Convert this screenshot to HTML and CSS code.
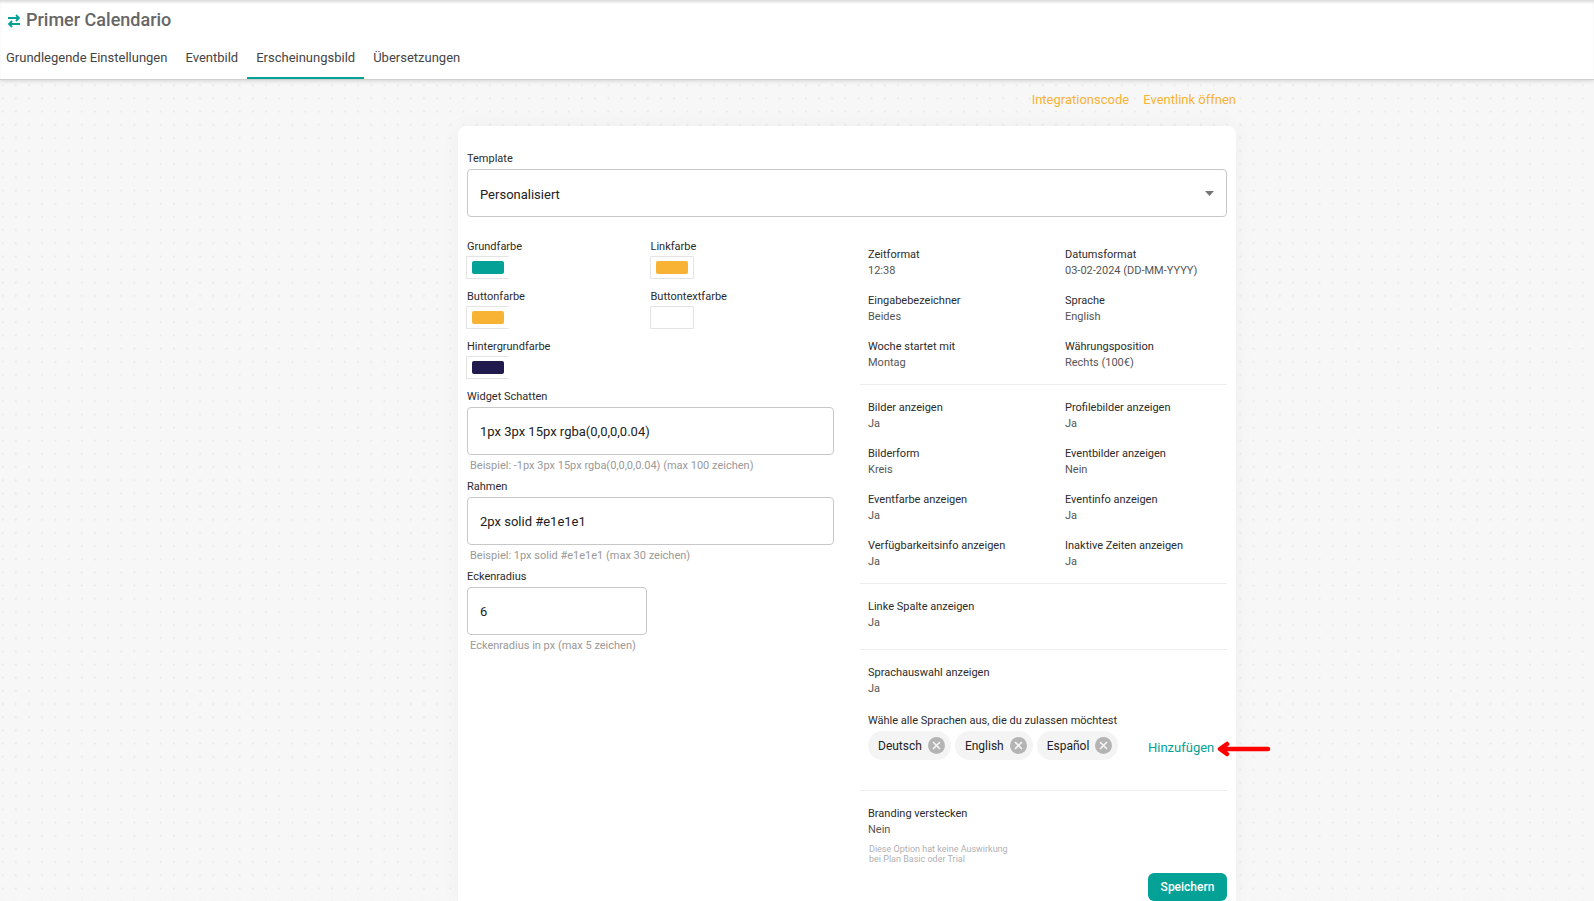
FILE: index.html
```html
<!DOCTYPE html>
<html lang="de">
<head>
<meta charset="utf-8">
<meta name="viewport" content="width=device-width, initial-scale=1">
<title>Primer Calendario</title>
<link rel="stylesheet" href="styles.css">
</head>
<body>
<header class="header">
  <div class="title-row">
    <svg class="swap" width="12" height="14" viewBox="0 0 12 14" fill="none" stroke="currentColor" stroke-width="1.8" aria-hidden="true">
      <path d="M0 4H11M8 1l3 3-3 3M12 10H1M4 7l-3 3 3 3"/>
    </svg>
    <h1 class="title">Primer Calendario</h1>
  </div>
  <nav class="tabs">
    <a class="tab" href="#basic">Grundlegende Einstellungen</a>
    <a class="tab" href="#image">Eventbild</a>
    <a class="tab tab-active" href="#appearance" aria-current="page">Erscheinungsbild</a>
    <a class="tab" href="#translations">Übersetzungen</a>
  </nav>
</header>

<main class="main">
  <div class="content">
    <div class="links">
      <a class="link" href="#code">Integrationscode</a>
      <a class="link" href="#open">Eventlink öffnen</a>
    </div>
    <form class="card">
      <div class="field">
        <label class="label" for="template">Template</label>
        <select class="control select" id="template"><option>Personalisiert</option></select>
      </div>

      <div class="columns">
        <div class="left">
          <div class="colors">
            <div class="color-field">
              <label class="label" for="c1">Grundfarbe</label>
              <input class="color color-open" id="c1" type="color" value="#03a196">
            </div>
            <div class="color-field">
              <label class="label" for="c2">Linkfarbe</label>
              <input class="color" id="c2" type="color" value="#f8b335">
            </div>
            <div class="color-field">
              <label class="label" for="c3">Buttonfarbe</label>
              <input class="color color-open" id="c3" type="color" value="#f8b335">
            </div>
            <div class="color-field">
              <label class="label" for="c4">Buttontextfarbe</label>
              <input class="color" id="c4" type="color" value="#ffffff">
            </div>
            <div class="color-field">
              <label class="label" for="c5">Hintergrundfarbe</label>
              <input class="color color-open" id="c5" type="color" value="#211a4c">
            </div>
          </div>
          <div class="fields">
            <div class="field">
              <label class="label" for="shadow">Widget Schatten</label>
              <input class="control" id="shadow" type="text" value="1px 3px 15px rgba(0,0,0,0.04)">
              <p class="hint">Beispiel: -1px 3px 15px rgba(0,0,0,0.04) (max 100 zeichen)</p>
            </div>
            <div class="field">
              <label class="label" for="border">Rahmen</label>
              <input class="control" id="border" type="text" value="2px solid #e1e1e1">
              <p class="hint">Beispiel: 1px solid #e1e1e1 (max 30 zeichen)</p>
            </div>
            <div class="field">
              <label class="label" for="radius">Eckenradius</label>
              <input class="control control-short" id="radius" type="text" value="6">
              <p class="hint">Eckenradius in px (max 5 zeichen)</p>
            </div>
          </div>
        </div>

        <div class="right">
          <dl class="group">
            <div><dt>Zeitformat</dt><dd>12:38</dd></div>
            <div><dt>Datumsformat</dt><dd>03-02-2024 (DD-MM-YYYY)</dd></div>
            <div><dt>Eingabebezeichner</dt><dd>Beides</dd></div>
            <div><dt>Sprache</dt><dd>English</dd></div>
            <div><dt>Woche startet mit</dt><dd>Montag</dd></div>
            <div><dt>Währungsposition</dt><dd>Rechts (100€)</dd></div>
          </dl>
          <dl class="group">
            <div><dt>Bilder anzeigen</dt><dd>Ja</dd></div>
            <div><dt>Profilebilder anzeigen</dt><dd>Ja</dd></div>
            <div><dt>Bilderform</dt><dd>Kreis</dd></div>
            <div><dt>Eventbilder anzeigen</dt><dd>Nein</dd></div>
            <div><dt>Eventfarbe anzeigen</dt><dd>Ja</dd></div>
            <div><dt>Eventinfo anzeigen</dt><dd>Ja</dd></div>
            <div><dt>Verfügbarkeitsinfo anzeigen</dt><dd>Ja</dd></div>
            <div><dt>Inaktive Zeiten anzeigen</dt><dd>Ja</dd></div>
          </dl>
          <dl class="group group-roomy">
            <div><dt>Linke Spalte anzeigen</dt><dd>Ja</dd></div>
          </dl>
          <section class="languages">
            <dl class="pair">
              <div><dt>Sprachauswahl anzeigen</dt><dd>Ja</dd></div>
            </dl>
            <p class="chips-label">Wähle alle Sprachen aus, die du zulassen möchtest</p>
            <div class="chips-row">
              <ul class="chips">
                <li class="chip">Deutsch<button class="remove" type="button" aria-label="Deutsch entfernen"><svg width="17" height="17" viewBox="0 0 17 17" aria-hidden="true"><circle cx="8.500" cy="8.500" r="8.500" fill="#b4b4b4"/><path d="M5 5l7 7M12 5l-7 7" stroke="#f4f4f4" stroke-width="1.700"/></svg></button></li>
                <li class="chip">English<button class="remove" type="button" aria-label="English entfernen"><svg width="17" height="17" viewBox="0 0 17 17" aria-hidden="true"><circle cx="8.500" cy="8.500" r="8.500" fill="#b4b4b4"/><path d="M5 5l7 7M12 5l-7 7" stroke="#f4f4f4" stroke-width="1.700"/></svg></button></li>
                <li class="chip">Español<button class="remove" type="button" aria-label="Español entfernen"><svg width="17" height="17" viewBox="0 0 17 17" aria-hidden="true"><circle cx="8.500" cy="8.500" r="8.500" fill="#b4b4b4"/><path d="M5 5l7 7M12 5l-7 7" stroke="#f4f4f4" stroke-width="1.700"/></svg></button></li>
              </ul>
              <div class="add-wrap">
                <button class="add" type="button">Hinzufügen</button>
                <svg class="arrow" width="54" height="16" viewBox="0 0 54 16" fill="none" stroke="#f00" stroke-width="4.500" stroke-linecap="round" stroke-linejoin="round" aria-hidden="true">
                  <path d="M4 8H51M10 3L3 8l7 5"/>
                </svg>
              </div>
            </div>
          </section>
          <section class="branding">
            <dl class="pair">
              <div><dt>Branding verstecken</dt><dd>Nein</dd></div>
            </dl>
            <p class="note">Diese Option hat keine Auswirkung bei Plan Basic oder Trial</p>
          </section>
          <button class="save" type="button">Speichern</button>
        </div>
      </div>
    </form>
  </div>
</main>
</body>
</html>
```
FILE: styles.css
```css
* { box-sizing: border-box; }

body, h1, p, dl, dd, ul { margin: 0; padding: 0; }

body {
  min-height: 100vh;
  display: flex;
  flex-direction: column;
  font: 11px/16px Roboto, "Liberation Sans", sans-serif;
  color: #2b2b2b;
  overflow-x: hidden;
}

input, select, button { font-family: inherit; margin: 0; }

a { text-decoration: none; }

.header {
  position: relative;
  background: #fff;
  border-bottom: 1px solid #d0d0d0;
  box-shadow: 0 1px 4px rgba(0, 0, 0, .15), inset 0 3px 3px -1px rgba(0, 0, 0, .15);
}

.title-row {
  display: flex;
  align-items: center;
  gap: 6px;
  padding: 8px 8px 0;
}

.swap { color: #03a196; margin-top: 2px; }

.title { font-size: 18px; line-height: 24px; font-weight: 500; color: #666; }

.tabs { display: flex; padding-top: 4px; }

.tab {
  padding: 14px 9px 11px;
  border-bottom: 2px solid transparent;
  font-size: 13px;
  line-height: 16px;
  color: #444;
}

.tab:first-child { padding-left: 6px; }

.tab-active { border-color: #03a196; }

.main {
  flex: 1;
  display: flex;
  justify-content: center;
  padding-left: 100px;
  background: #f7f7f7 url("data:image/svg+xml,%3Csvg xmlns='http://www.w3.org/2000/svg' width='79' height='79' viewBox='0 0 60 60'%3E%3Cpattern id='p' width='10' height='10' patternUnits='userSpaceOnUse'%3E%3Ccircle cx='2' cy='4' r='.8' fill='%23e9e9e9'/%3E%3C/pattern%3E%3Crect width='60' height='60' fill='url(%23p)'/%3E%3C/svg%3E");
}

.content {
  width: 100%;
  max-width: 778px;
  display: flex;
  flex-direction: column;
}

.links {
  display: flex;
  justify-content: flex-end;
  gap: 14px;
  padding: 11px 0 18px;
}

.link { font-size: 13px; line-height: 17px; color: #f8b335; }

.card {
  flex: 1;
  padding: 25px 9px 0;
  background: #fff;
  border-radius: 8px 8px 0 0;
  box-shadow: 0 0 20px rgba(0, 0, 0, .04);
}

.field, .color-field { display: flex; flex-direction: column; align-items: flex-start; }

.label { line-height: 16px; }

.control {
  width: 100%;
  height: 48px;
  margin-top: 2px;
  padding: 0 12px;
  border: 1px solid #c8c8c8;
  border-radius: 4px;
  background: #fff;
  font-size: 13px;
  color: #222;
}

.select {
  appearance: none;
  padding-top: 2px;
  background: #fff url("data:image/svg+xml,%3Csvg xmlns='http://www.w3.org/2000/svg' width='9' height='5'%3E%3Cpath d='M0 0h9L4.500 5z' fill='%23757575'/%3E%3C/svg%3E") no-repeat right 12px center;
}

.control-short { width: 180px; }

.columns {
  display: grid;
  grid-template-columns: 1fr 1fr;
  gap: 26px;
  padding-top: 22px;
}

.colors {
  display: grid;
  grid-template-columns: 1fr 1fr;
  row-gap: 10px;
}

.color {
  appearance: none;
  width: 44px;
  height: 23px;
  margin: 1px 0 0 -1px;
  padding: 0;
  border: 1px solid #e4e4e4;
  border-radius: 1px;
  background: #fff;
}

.color-open { width: 43px; border-right: 0; }

.color::-webkit-color-swatch-wrapper { padding: 4px 5px; }

.color::-webkit-color-swatch { border: 0; border-radius: 2px; }

.fields {
  display: flex;
  flex-direction: column;
  gap: 5px;
  padding-top: 10px;
}

.hint { padding: 3px 3px 0; color: #999; }

.right { padding-top: 8px; display: flex; flex-direction: column; }

.group {
  display: grid;
  grid-template-columns: 197px 1fr;
  row-gap: 14px;
  padding: 0 0 13px 8px;
  margin-bottom: 15px;
  border-bottom: 1px solid #eee;
}

.group-roomy { padding-bottom: 18px; }

dd { color: #555; }

.languages {
  padding-bottom: 30px;
  margin-bottom: 15px;
  border-bottom: 1px solid #eee;
}

.pair, .chips-label { padding-left: 8px; }

.chips-label { padding-top: 16px; }

.chips-row {
  display: grid;
  grid-template-columns: 1fr 79px;
  padding: 2px 0 0 8px;
}

.chips { display: flex; gap: 4px; list-style: none; }

.chip {
  display: flex;
  align-items: center;
  gap: 6px;
  height: 29px;
  padding: 0 6px 0 10px;
  border-radius: 15px;
  background: #f4f4f4;
  font-size: 12px;
  color: #222;
}

.remove {
  display: flex;
  padding: 0;
  border: 0;
  background: none;
}

.add-wrap { position: relative; padding-top: 8px; }

.add {
  padding: 0;
  border: 0;
  background: none;
  font-size: 13px;
  line-height: 17px;
  color: #03a196;
}

.arrow { position: absolute; left: 69px; top: 10px; }

.note {
  width: 160px;
  padding: 6px 0 0 9px;
  font-size: 9px;
  line-height: 10px;
  color: #b0b0b0;
}

.save {
  align-self: flex-end;
  width: 79px;
  height: 28px;
  margin-top: 9px;
  padding: 0;
  border: 0;
  border-radius: 6px;
  background: #03a196;
  font-size: 12px;
  font-weight: 500;
  color: #fff;
}
```
